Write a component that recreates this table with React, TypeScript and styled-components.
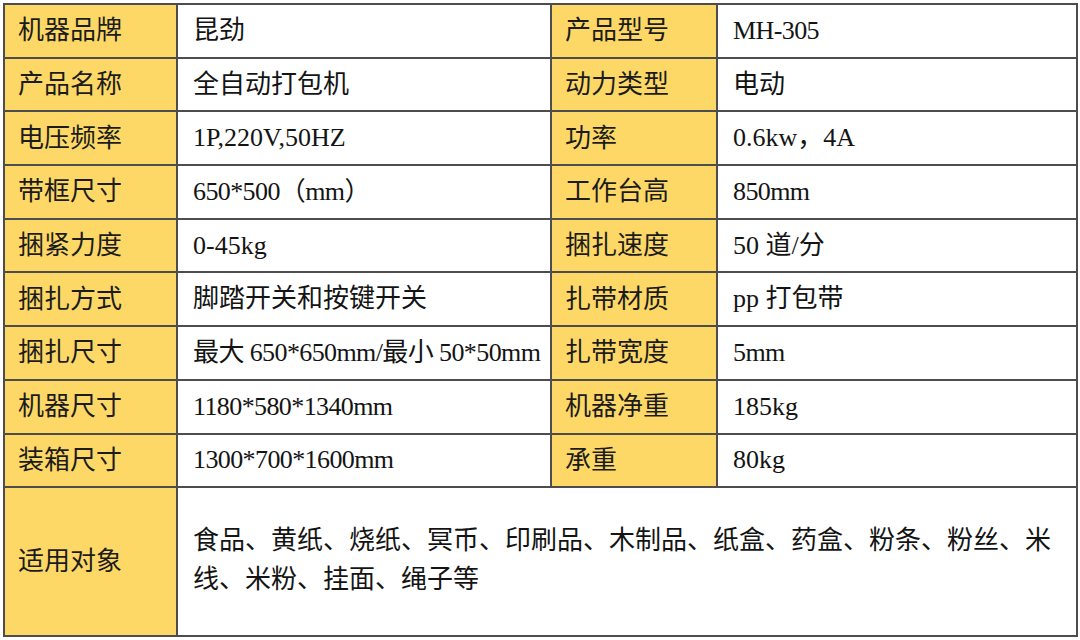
import React from 'react';
import styled, { createGlobalStyle } from 'styled-components';

const GlobalStyle = createGlobalStyle`
    html, body {
        margin: 0;
        padding: 0;
        background: #fff;
    }

    body {
        padding: 3px 0 0 3px;
        font-family: 'Noto Sans CJK SC', sans-serif;
    }
`;

const Sheet = styled.div`
    background: #4d4d4d;
    display: grid;
    gap: 2px;
    grid-template-columns: 171px 372px 164px 358px;
    grid-template-rows: repeat(9, 51.7px) 147px;
    padding: 2px;
    width: max-content;
`;

const LabelCell = styled.div`
    align-items: center;
    background: #fdd867;
    box-sizing: border-box;
    color: #1c1c1c;
    display: flex;
    font-family: 'Noto Sans CJK SC', sans-serif;
    font-size: 26px;
    line-height: 1;
    padding: 0 0 5px 13px;
`;

const ValueCell = styled.div<{ wide?: boolean; tight?: boolean }>`
    align-items: center;
    background: #fff;
    box-sizing: border-box;
    color: #141414;
    display: flex;
    font-family: 'Liberation Serif', 'Noto Sans CJK SC', serif;
    font-size: 26px;
    letter-spacing: ${props => (props.tight ? '-0.6px' : 'normal')};
    line-height: ${props => (props.wide ? '38.5px' : '1')};
    padding: 0 15px;
    white-space: ${props => (props.wide ? 'normal' : 'nowrap')};
    ${props => (props.wide ? 'grid-column: span 3; padding-bottom: 2px;' : '')}
`;

const SPECS: Array<[string, string, string, string]> = [
    ['机器品牌', '昆劲', '产品型号', 'MH-305'],
    ['产品名称', '全自动打包机', '动力类型', '电动'],
    ['电压频率', '1P,220V,50HZ', '功率', '0.6kw，4A'],
    ['带框尺寸', '650*500（mm）', '工作台高', '850mm'],
    ['捆紧力度', '0-45kg', '捆扎速度', '50 道/分'],
    ['捆扎方式', '脚踏开关和按键开关', '扎带材质', 'pp 打包带'],
    ['捆扎尺寸', '最大 650*650mm/最小 50*50mm', '扎带宽度', '5mm'],
    ['机器尺寸', '1180*580*1340mm', '机器净重', '185kg'],
    ['装箱尺寸', '1300*700*1600mm', '承重', '80kg'],
];

const USES = '食品、黄纸、烧纸、冥币、印刷品、木制品、纸盒、药盒、粉条、粉丝、米线、米粉、挂面、绳子等';

// values with lots of latin letters run wider than the original's half-width glyphs
const isTight = (value: string) => value.includes('mm') || value.startsWith('MH');

export default function App() {
    return (
        <>
            <GlobalStyle />
            <Sheet>
                {SPECS.map(([labelA, valueA, labelB, valueB]) => (
                    <React.Fragment key={labelA}>
                        <LabelCell>{labelA}</LabelCell>
                        <ValueCell tight={isTight(valueA)}>{valueA}</ValueCell>
                        <LabelCell>{labelB}</LabelCell>
                        <ValueCell tight={isTight(valueB)}>{valueB}</ValueCell>
                    </React.Fragment>
                ))}
                <LabelCell>适用对象</LabelCell>
                <ValueCell wide>{USES}</ValueCell>
            </Sheet>
        </>
    );
}
